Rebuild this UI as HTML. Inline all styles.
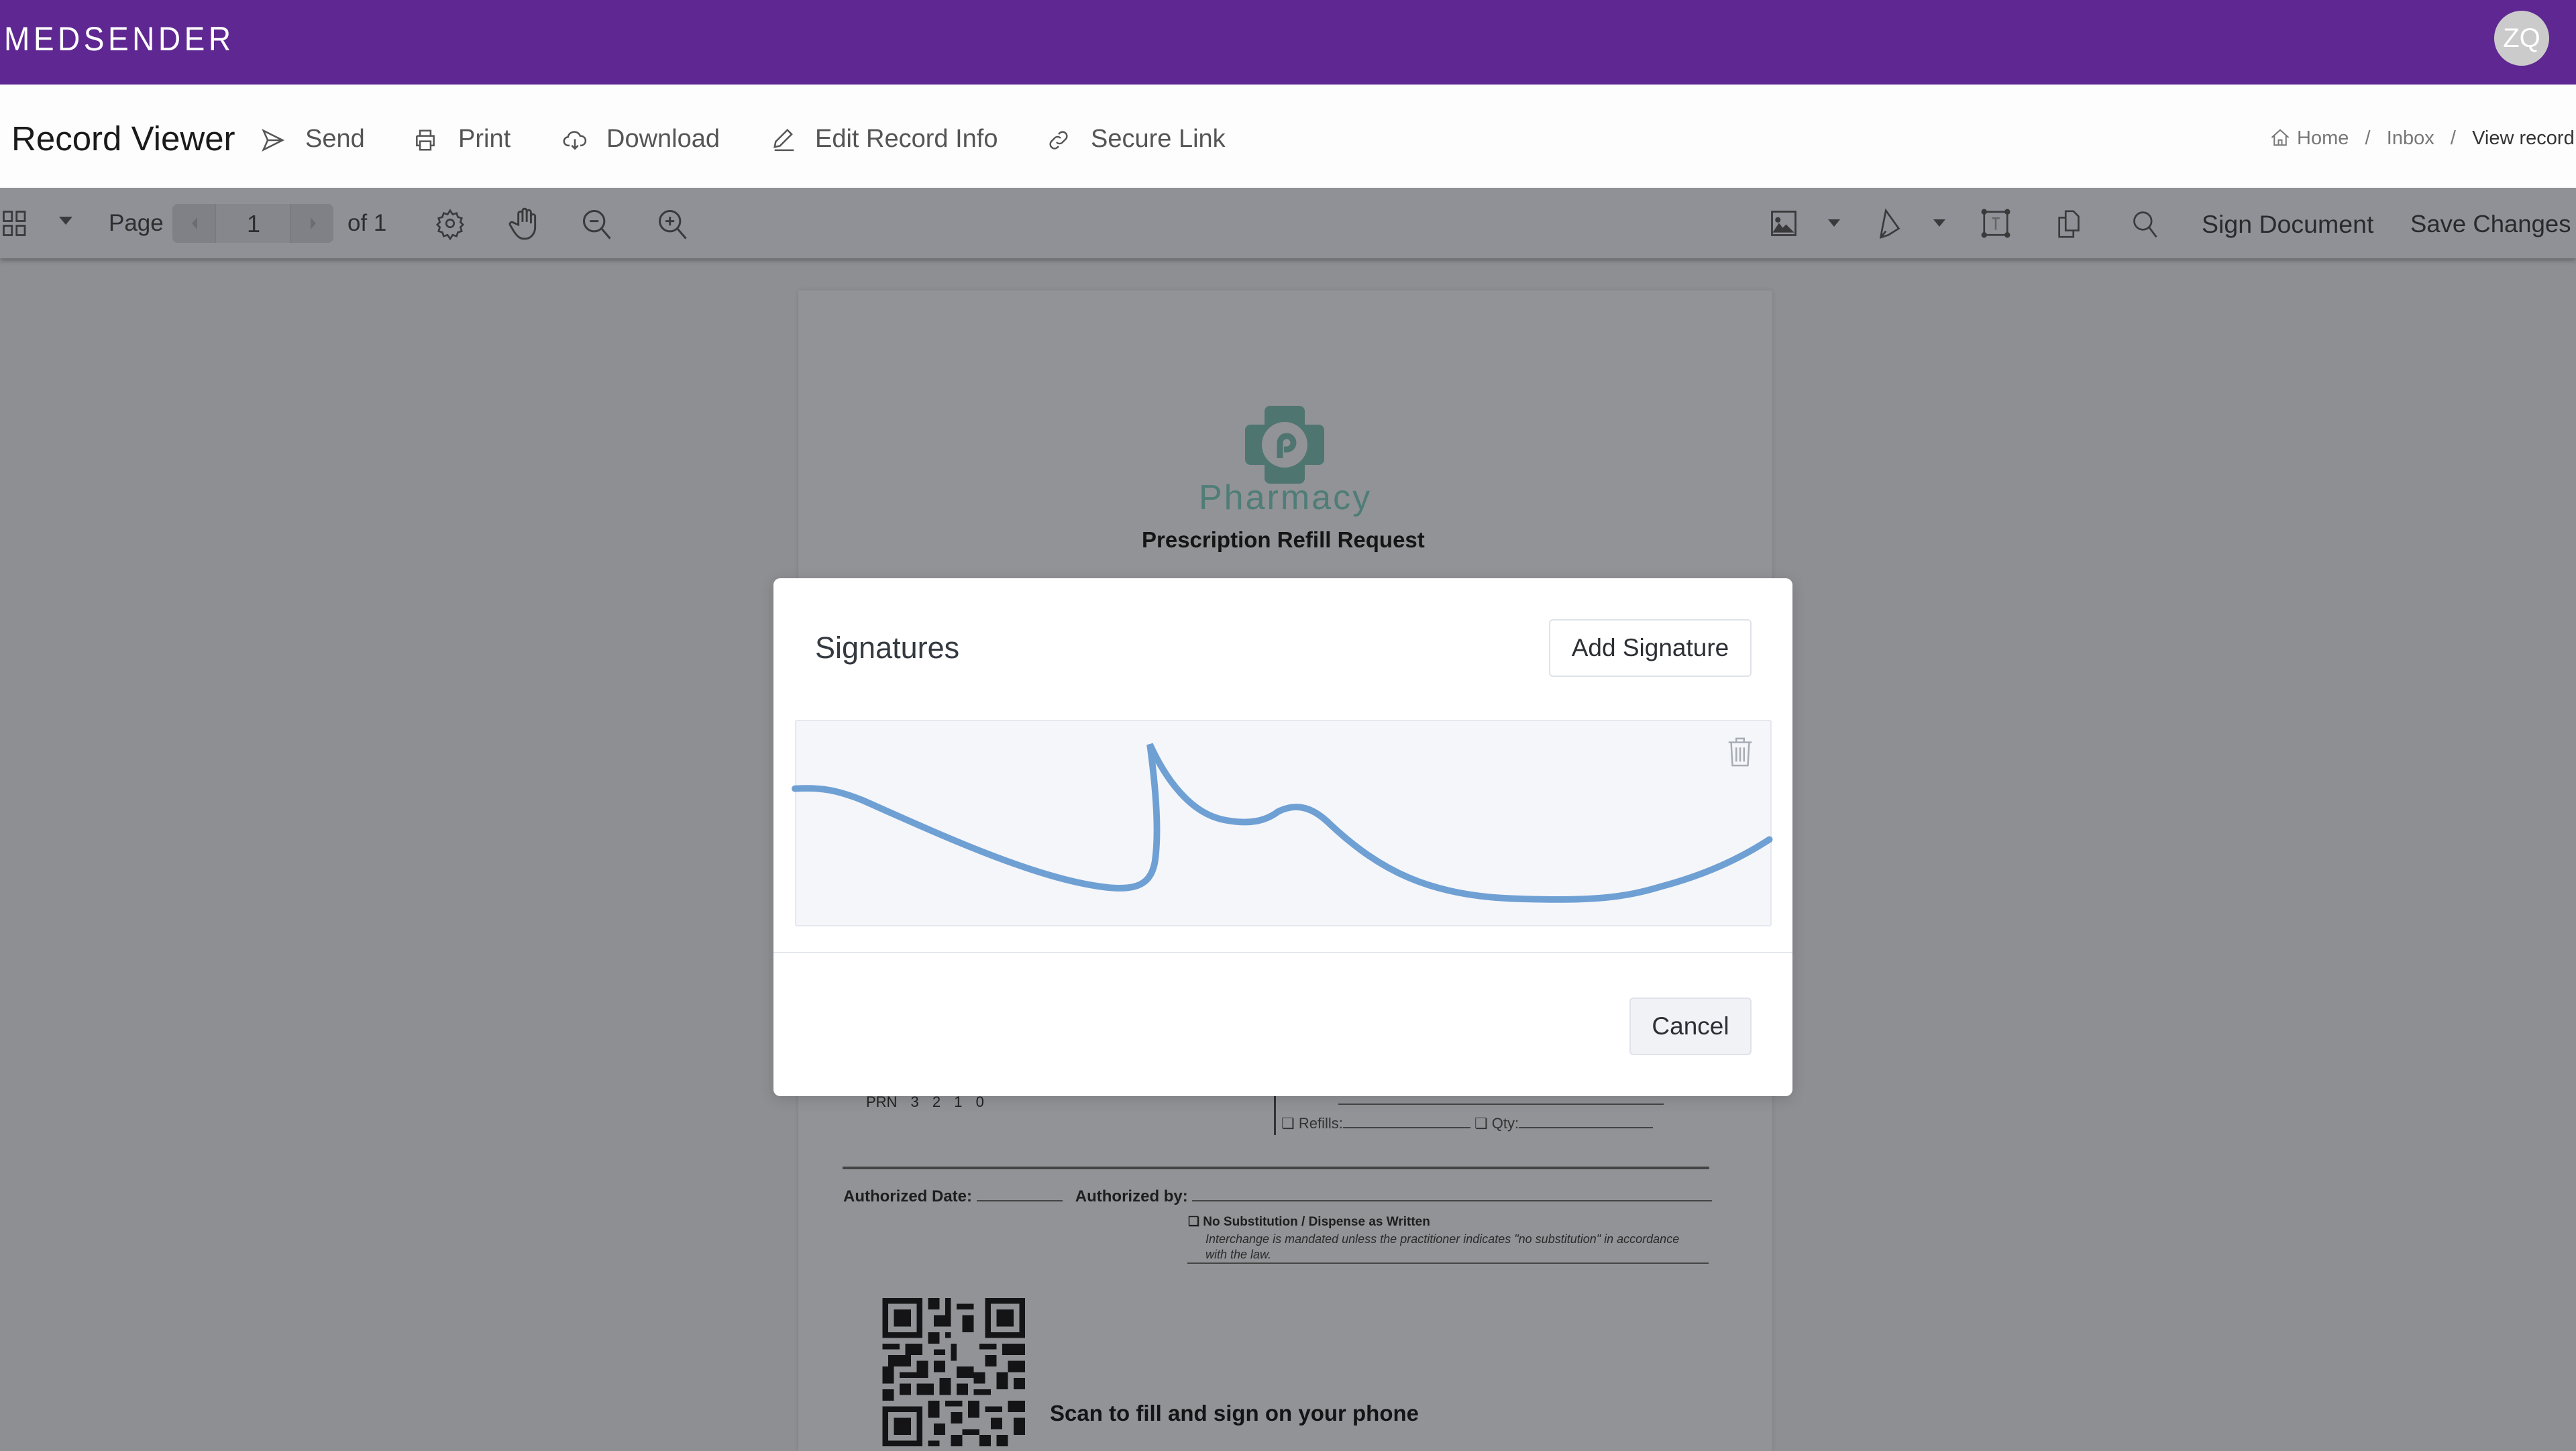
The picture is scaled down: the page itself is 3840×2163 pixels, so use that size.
<!DOCTYPE html>
<html><head><meta charset="utf-8"><style>
*{margin:0;padding:0;box-sizing:border-box}
body{width:3840px;height:2156px;overflow:hidden;position:relative;font-family:"Liberation Sans",sans-serif;background:#8e8f93}
.a{position:absolute;white-space:nowrap}
svg.i{position:absolute;overflow:visible}
</style></head><body>
<!-- header -->
<div class="a" style="left:0;top:0;width:3840px;height:126px;background:#5f2791"></div>
<div class="a" style="left:6px;top:29px;font-size:50px;color:#fff;letter-spacing:6px;transform:scaleX(0.92);transform-origin:left">MEDSENDER</div>
<div class="a" style="left:3718px;top:16px;width:82px;height:82px;border-radius:50%;background:#cbcbcb;color:#fff;font-size:40px;text-align:center;line-height:82px">ZQ</div>
<!-- nav -->
<div class="a" style="left:0;top:126px;width:3840px;height:154px;background:#fdfdfd"></div>
<div class="a" style="left:17px;top:177px;font-size:51px;color:#1a1a1a">Record Viewer</div>
<div class="a" style="top:186px;left:455px;font-size:38px;color:#555">Send</div>
<div class="a" style="top:186px;left:683px;font-size:38px;color:#555">Print</div>
<div class="a" style="top:186px;left:904px;font-size:38px;color:#555">Download</div>
<div class="a" style="top:186px;left:1215px;font-size:38px;color:#555">Edit Record Info</div>
<div class="a" style="top:186px;left:1626px;font-size:38px;color:#555">Secure Link</div>
<svg class="i" style="left:388px;top:190px" width="38" height="38" viewBox="0 0 24 24" fill="none" stroke="#555" stroke-width="1.6"><path d="M3 3l18 9-18 9 4-9z M7 12h14"/></svg>
<svg class="i" style="left:615px;top:190px" width="38" height="38" viewBox="0 0 24 24" fill="none" stroke="#555" stroke-width="1.6"><path d="M7 8V3h10v5M4 8h16v9h-3M7 17H4V8M7 13h10v8H7z"/></svg>
<svg class="i" style="left:837px;top:190px" width="40" height="38" viewBox="0 0 24 24" fill="none" stroke="#555" stroke-width="1.6"><path d="M7 17H6a4 4 0 0 1-.5-8A6 6 0 0 1 17 8a4 4 0 0 1 1 9h-1M12 11v9M9 17l3 3 3-3"/></svg>
<svg class="i" style="left:1150px;top:188px" width="38" height="40" viewBox="0 0 24 24" fill="none" stroke="#555" stroke-width="1.6"><path d="M15 3l4 4L8 18l-5 1 1-5z M3 22h18"/></svg>
<svg class="i" style="left:1560px;top:190px" width="36" height="38" viewBox="0 0 24 24" fill="none" stroke="#555" stroke-width="1.6"><path d="M10 14a4 4 0 0 0 6 0l3-3a4 4 0 0 0-6-6l-1 1M14 10a4 4 0 0 0-6 0l-3 3a4 4 0 0 0 6 6l1-1"/></svg>
<svg class="i" style="left:3384px;top:190px" width="30" height="30" viewBox="0 0 24 24" fill="none" stroke="#777" stroke-width="1.6"><path d="M2 12L12 3l10 9M5 10v11h14V10M10 21v-6h4v6"/></svg>
<div class="a" style="top:190px;left:3424px;font-size:29px;color:#777">Home&nbsp;&nbsp;&nbsp;/&nbsp;&nbsp;&nbsp;Inbox&nbsp;&nbsp;&nbsp;/&nbsp;&nbsp;&nbsp;<span style="color:#333">View record</span></div>
<!-- toolbar -->
<div class="a" style="left:0;top:280px;width:3840px;height:105px;background:#909196;box-shadow:0 4px 6px rgba(0,0,0,.25)"></div>
<svg class="i" style="left:2px;top:312px" width="42" height="42" viewBox="0 0 24 24" fill="none" stroke="#3a3a3c" stroke-width="1.6"><rect x="2" y="2" width="7" height="8"/><rect x="13" y="2" width="7" height="8"/><rect x="2" y="14" width="7" height="8"/><rect x="13" y="14" width="7" height="8"/></svg>
<div class="a" style="left:88px;top:323px;border-left:10px solid transparent;border-right:10px solid transparent;border-top:12px solid #3a3a3c"></div>
<div class="a" style="left:162px;top:313px;font-size:35px;color:#2e2e30">Page</div>
<div class="a" style="left:257px;top:304px;width:240px;height:58px;background:#808186;border-radius:8px"></div>
<div class="a" style="left:320px;top:304px;width:114px;height:58px;background:#86878c;border-left:2px solid #7a7b80;border-right:2px solid #7a7b80"></div>
<div class="a" style="left:286px;top:324px;border-top:9px solid transparent;border-bottom:9px solid transparent;border-right:8px solid #6c6d72"></div>
<div class="a" style="left:463px;top:324px;border-top:9px solid transparent;border-bottom:9px solid transparent;border-left:8px solid #6c6d72"></div>
<div class="a" style="left:368px;top:313px;font-size:36px;color:#2e2e30">1</div>
<div class="a" style="left:518px;top:313px;font-size:35px;color:#2e2e30">of 1</div>
<svg class="i" style="left:648px;top:310px" width="46" height="46" viewBox="0 0 24 24" fill="none" stroke="#3a3a3c" stroke-width="1.4"><circle cx="12" cy="12" r="3"/><path d="M12 2l2 3 3-1 1 3 3 1-1 3 2 2-2 2 1 3-3 1-1 3-3-1-2 3-2-3-3 1-1-3-3-1 1-3-2-2 2-2-1-3 3-1 1-3 3 1z"/></svg>
<svg class="i" style="left:756px;top:306px" width="50" height="54" viewBox="0 0 24 24" fill="none" stroke="#3a3a3c" stroke-width="1.4"><path d="M8 13V5a1.5 1.5 0 0 1 3 0v6V3a1.5 1.5 0 0 1 3 0v8V4a1.5 1.5 0 0 1 3 0v8V7a1.5 1.5 0 0 1 3 0v8c0 4-3 8-7 8h-1c-3 0-5-2-7-5l-3-5a1.5 1.5 0 0 1 2.5-1.5z"/></svg>
<svg class="i" style="left:864px;top:306px" width="52" height="56" viewBox="0 0 24 24" fill="none" stroke="#3a3a3c" stroke-width="1.4"><circle cx="10" cy="10" r="7"/><path d="M15 15l6 7M7 10h6"/></svg>
<svg class="i" style="left:977px;top:306px" width="52" height="56" viewBox="0 0 24 24" fill="none" stroke="#3a3a3c" stroke-width="1.4"><circle cx="10" cy="10" r="7"/><path d="M15 15l6 7M7 10h6M10 7v6"/></svg>
<svg class="i" style="left:2636px;top:312px" width="46" height="42" viewBox="0 0 24 24" fill="none" stroke="#3a3a3c" stroke-width="1.6"><rect x="2" y="2" width="20" height="20"/><circle cx="7" cy="9" r="1.5" fill="#3a3a3c"/><path d="M4 19l4-6 3 4 3-3 5 5z" fill="#3a3a3c"/></svg>
<div class="a" style="left:2725px;top:327px;border-left:9px solid transparent;border-right:9px solid transparent;border-top:11px solid #3a3a3c"></div>
<svg class="i" style="left:2794px;top:306px" width="46" height="54" viewBox="0 0 24 24" fill="none" stroke="#3a3a3c" stroke-width="1.4"><path d="M9 2l10 14-8 5-6 2 1-6z M5 23l4-5"/></svg>
<div class="a" style="left:2882px;top:327px;border-left:9px solid transparent;border-right:9px solid transparent;border-top:11px solid #3a3a3c"></div>
<svg class="i" style="left:2952px;top:306px" width="46" height="54" viewBox="0 0 24 24" fill="none" stroke="#3a3a3c" stroke-width="1.4"><rect x="3" y="3" width="18" height="18"/><circle cx="3" cy="3" r="1.5" fill="#3a3a3c"/><circle cx="21" cy="3" r="1.5" fill="#3a3a3c"/><circle cx="3" cy="21" r="1.5" fill="#3a3a3c"/><circle cx="21" cy="21" r="1.5" fill="#3a3a3c"/><path d="M9 8h6M12 8v9" stroke="#666"/></svg>
<svg class="i" style="left:3062px;top:306px" width="46" height="56" viewBox="0 0 24 24" fill="none" stroke="#3a3a3c" stroke-width="1.4"><path d="M9 2h6l4 4v11H9z M9 7H4v15h11v-5"/></svg>
<svg class="i" style="left:3176px;top:310px" width="44" height="50" viewBox="0 0 24 24" fill="none" stroke="#3a3a3c" stroke-width="1.5"><circle cx="10" cy="9" r="7"/><path d="M15 14l6 8"/></svg>
<div class="a" style="left:3282px;top:313px;font-size:37.5px;color:#2a2a2c">Sign Document</div>
<div class="a" style="left:3593px;top:313px;font-size:36.5px;color:#2a2a2c">Save Changes</div>
<!-- document -->
<div class="a" style="left:1190px;top:433px;width:1452px;height:1730px;background:#929397;box-shadow:0 0 6px rgba(0,0,0,.12)"></div>
<svg class="i" style="left:1856px;top:605px" width="118" height="116" viewBox="0 0 118 116"><rect x="0" y="28" width="118" height="60" rx="8" fill="#4f7571"/><rect x="29" y="0" width="60" height="116" rx="8" fill="#4f7571"/><circle cx="59" cy="58" r="34" fill="#929397"/><path d="M52 78V55a10 10 0 1 1 10 10h-4" fill="none" stroke="#4f7571" stroke-width="9"/></svg>
<div class="a" style="left:1787px;top:712px;font-size:52px;color:#4f7d77;letter-spacing:3px">Pharmacy</div>
<div class="a" style="left:1702px;top:786px;font-size:33px;font-weight:bold;color:#151515">Prescription Refill Request</div>
<div class="a" style="left:1291px;top:1630px;font-size:22px;color:#222;word-spacing:14px">PRN 3 2 1 0</div>
<div class="a" style="left:1899px;top:1630px;width:3px;height:62px;background:#333"></div>
<div class="a" style="left:1995px;top:1645px;width:485px;height:2px;background:#444"></div>
<div class="a" style="left:1910px;top:1662px;font-size:22px;color:#333">❏ Refills:<span style="display:inline-block;width:190px;border-bottom:2px solid #444"></span> ❏ Qty:<span style="display:inline-block;width:200px;border-bottom:2px solid #444"></span></div>
<div class="a" style="left:1256px;top:1739px;width:1292px;height:4px;background:#444"></div>
<div class="a" style="left:1257px;top:1770px;font-size:24px;font-weight:bold;color:#1e1e1e">Authorized Date: <span style="display:inline-block;width:128px;border-bottom:2px solid #444"></span>&nbsp;&nbsp; Authorized by: <span style="display:inline-block;width:775px;border-bottom:2px solid #444"></span></div>
<div class="a" style="left:1771px;top:1810px;font-size:19px;font-weight:bold;color:#1e1e1e">❏ No Substitution / Dispense as Written</div>
<div class="a" style="left:1797px;top:1836px;font-size:18px;font-style:italic;color:#2a2a2a;line-height:23px">Interchange is mandated unless the practitioner indicates "no substitution" in accordance<br>with the law.</div>
<div class="a" style="left:1770px;top:1882px;width:777px;height:2px;background:#444"></div>
<svg class="i" style="left:1315px;top:1935px" width="213" height="221" viewBox="0 0 25 26" shape-rendering="crispEdges" fill="#141416">
<path d="M0 0h7v7H0zM1 1v5h5V1zM2 2h3v3H2z M18 0h7v7h-7zM19 1v5h5V1zM20 2h3v3h-3z M0 19h7v7H0zM1 20v5h5v-5zM2 21h3v3H2z" fill-rule="evenodd"/>
<path d="M8 0h2v2H8zM11 0h1v3h-1zM9 3h3v2H9zM13 1h3v1h-3zM14 3h2v3h-2zM8 6h2v2H8zM11 6h1v1h-1zM12 8h1v3h-1zM9 9h2v1H9zM0 8h3v1H0zM1 10h4v2H1zM4 8h3v2H4zM0 12h2v3H0zM3 13h3v1H3zM6 11h2v3H6zM9 11h2v2H9zM13 12h3v2h-3zM17 8h3v1h-3zM21 8h4v2h-4zM18 10h2v2h-2zM22 11h3v2h-3zM16 13h2v2h-2zM20 13h2v3h-2zM23 14h2v2h-2zM0 16h2v2H0zM3 15h2v2H3zM6 15h3v2H6zM10 14h2v3h-2zM13 15h2v2h-2zM16 16h3v1h-3zM8 18h2v3H8zM11 18h3v1h-3zM12 20h2v2h-2zM15 18h2v3h-2zM18 19h3v1h-3zM22 18h3v2h-3zM19 21h2v2h-2zM23 21h2v3h-2zM9 22h2v2H9zM14 23h3v1h-3zM8 25h2v1H8zM12 24h2v2h-2zM17 24h2v2h-2zM20 24h2v2h-2z"/></svg>
<div class="a" style="left:1565px;top:2088px;font-size:33px;font-weight:bold;color:#141416">Scan to fill and sign on your phone</div>
<!-- modal -->
<div class="a" style="left:1153px;top:862px;width:1519px;height:772px;background:#fff;border-radius:10px;box-shadow:0 4px 20px rgba(0,0,0,.15)"></div>
<div class="a" style="left:1215px;top:940px;font-size:45px;color:#343a40">Signatures</div>
<div class="a" style="left:2309px;top:923px;width:302px;height:86px;border:2px solid #dfe2ea;border-radius:6px;background:#fff;font-size:37px;color:#2c2f33;text-align:center;line-height:82px">Add Signature</div>
<div class="a" style="left:1185px;top:1073px;width:1456px;height:308px;background:#f5f6fa;border:2px solid #e6e8ef;border-radius:3px"></div>
<svg class="i" style="left:1185px;top:1073px" width="1455" height="308" viewBox="484 438 594 126" preserveAspectRatio="none"><path d="M484,480 C500,479 510,481 525,487 C570,507 620,530 660,538 C690,544 700,540 703,525 C706,505 703,475 700,453 C710,475 725,495 745,499 C760,502 770,500 778,494 C790,488 800,492 810,502 C840,530 870,545 920,547 C970,549 990,546 1010,540 C1040,532 1060,522 1077,511" fill="none" stroke="#6fa0d4" stroke-width="4" stroke-linecap="round"/></svg>
<svg class="i" style="left:2574px;top:1097px" width="40" height="46" viewBox="0 0 20 24" fill="none" stroke="#a8acb4" stroke-width="1.3"><path d="M1 5h18M7 5V2h6v3M3 5l1 18h12l1-18M7 9v11M10 9v11M13 9v11"/></svg>
<div class="a" style="left:1153px;top:1419px;width:1519px;height:2px;background:#e6e8ef"></div>
<div class="a" style="left:2429px;top:1487px;width:182px;height:86px;border:2px solid #dfe2ea;border-radius:6px;background:#f1f2f6;font-size:37px;color:#2c2f33;text-align:center;line-height:82px">Cancel</div>
</body></html>
